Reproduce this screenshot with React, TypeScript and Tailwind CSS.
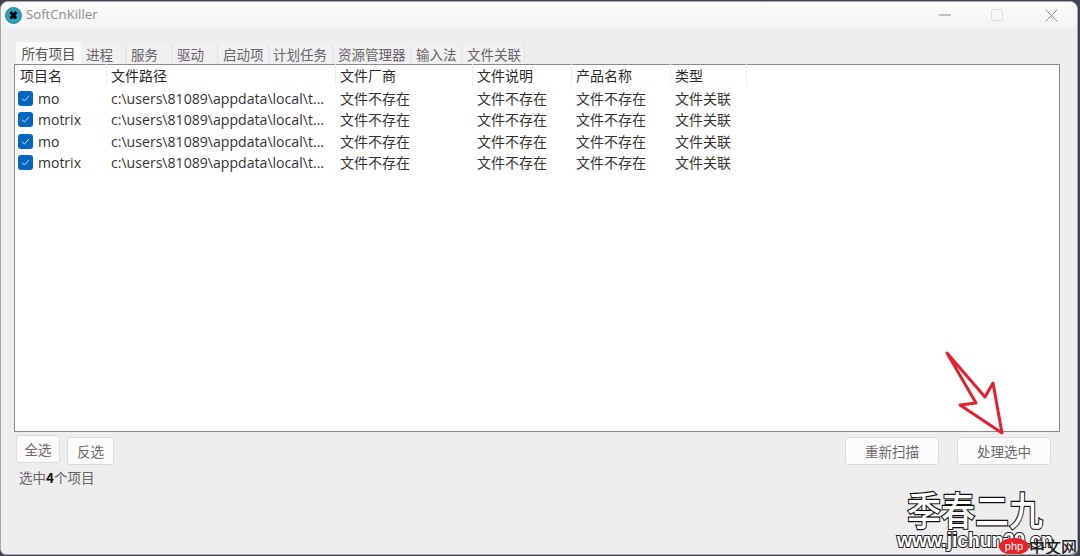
import React from "react";

const tabs: [string, string][] = [
  ["进程", "w-[45px] pl-[5px]"],
  ["服务", "w-[45px] pl-[4px]"],
  ["驱动", "w-[45px] pl-[4px]"],
  ["启动项", "w-[50px] pl-[4px]"],
  ["计划任务", "w-[63px] pl-[3px]"],
  ["资源管理器", "w-[77px] pl-[4px]"],
  ["输入法", "w-[50px] pl-[4px]"],
  ["文件关联", "w-[62px] pl-[4px]"],
];

const cols = ["w-[92px] pl-[5px]", "w-[229px] pl-[4px]", "w-[137px] pl-[4px]", "w-[99px] pl-[4px]", "w-[99px] pl-[4px]", "w-[76px] pl-[4px]"];
const heads = ["项目名", "文件路径", "文件厂商", "文件说明", "产品名称", "类型"];
const names = ["mo", "motrix", "mo", "motrix"];

function Check() {
  return (
    <span className="w-[15px] h-[15px] rounded-[3px] bg-[#0067c0] flex items-center justify-center shrink-0">
      <svg width="11" height="11" viewBox="0 0 11 11" fill="none" stroke="#cfe2f5" strokeWidth="1">
        <path d="M2 5.8 L4.4 8 L9 3" />
      </svg>
    </span>
  );
}

const btn = "h-[28px] rounded-[3px] border border-[#dcdcdc] bg-[#fbfbfb] flex items-center justify-center text-[13.5px] text-[#6a6a6a]";

export default function App() {
  return (
    <div className="w-[1080px] h-[556px] bg-[#3d4350] overflow-hidden pt-px pl-0 pr-[2px] pb-px [font-family:'Noto_Sans_CJK_SC','Noto_Sans',sans-serif]">
      <div className="relative w-full h-full rounded-t-[8px] rounded-b-[6px] border border-[#a8a8a8] bg-[#eeeeee] flex flex-col overflow-hidden">
        {/* title bar */}
        <div className="h-[26px] shrink-0 bg-gradient-to-b from-[#fbfbfb] to-[#f3f3f3] flex items-center pl-[4px] pr-[19px]">
          <svg width="17" height="17" viewBox="0 0 17 17" className="shrink-0">
            <circle cx="8.5" cy="8.5" r="8" fill="#27a3bf" />
            <circle cx="8.5" cy="8.5" r="8" fill="none" stroke="#0f6f88" strokeWidth="0.8" />
            <path d="M5.5 5 L11 11.5 M11.5 5 L5.5 11.5" stroke="#000" strokeWidth="3" />
          </svg>
          <span className="ml-[4px] text-[13.2px] text-[#8d8d8d] [font-family:'Open_Sans',sans-serif]">SoftCnKiller</span>
          <div className="ml-auto flex items-center text-[#b0b0b0]">
            <span className="w-[12px] h-[1.5px] bg-[#c0c0c0]" />
            <span className="ml-[40px] w-[12px] h-[12px] rounded-[2px] border border-[#dedede]" />
            <svg className="ml-[42px]" width="13" height="13" viewBox="0 0 13 13" stroke="#8e8e8e" strokeWidth="1">
              <path d="M0.5 0.5 L12.5 12.5 M12.5 0.5 L0.5 12.5" />
            </svg>
          </div>
        </div>

        {/* tabs */}
        <div className="mt-[15px] ml-[15px] h-[21px] flex items-end text-[13.5px] text-[#666666] relative z-10">
          <div className="w-[65px] h-[22px] -mb-px bg-[#fafafa] flex items-center justify-center text-[#555555] -translate-y-px">所有项目</div>
          {tabs.map(([t, w]) => (
            <div key={t} className={`${w} h-[20px] mr-px bg-[#f0f0f0] border-r border-[#e4e4e4] flex items-center whitespace-nowrap`}>
              {t}
            </div>
          ))}
        </div>

        {/* table */}
        <div className="ml-[13px] w-[1046px] h-[368px] border border-[#8a8a8a] bg-white flex flex-col text-[14px] text-[#2a2a2a] leading-[21px]">
          <div className="flex h-[22px] -mt-px">
            {heads.map((h, i) => (
              <div key={h} className={`${cols[i]} h-[22px] border-r border-[#eeeeee] whitespace-nowrap flex items-center`}>
                {h}
              </div>
            ))}
          </div>
          <div className="flex flex-col mt-[1.6px]">
            {names.map((n, i) => (
              <div key={i} className="flex h-[21.4px] items-center text-[#333333]">
                <div className={`${cols[0]} !pl-[3px] flex items-center gap-[5px]`}>
                  <Check />
                  <span className="[font-family:'Open_Sans',sans-serif] text-[14px]">{n}</span>
                </div>
                <div className={`${cols[1]} [font-family:'Open_Sans',sans-serif] text-[14.1px] whitespace-nowrap`}>
                  {"c:\\users\\81089\\appdata\\local\\t..."}
                </div>
                <div className={cols[2]}>文件不存在</div>
                <div className={cols[3]}>文件不存在</div>
                <div className={cols[4]}>文件不存在</div>
                <div className={cols[5]}>文件关联</div>
              </div>
            ))}
          </div>
        </div>

        {/* bottom controls */}
        <div className="mx-[15px] mt-[3px] flex items-start">
          <div className={`${btn} w-[44px]`}>全选</div>
          <div className={`${btn} w-[47px] ml-[7px] mt-[2px]`}>反选</div>
          <div className={`${btn} w-[94px] ml-auto mt-[2px]`}>重新扫描</div>
          <div className={`${btn} w-[94px] ml-[18px] mr-[11px] mt-[2px]`}>处理选中</div>
        </div>
        <div className="ml-[18px] mt-[2px] text-[13.5px] text-[#666666] leading-[20px]">
          选中<span className="font-bold text-[#111111]">4</span>个项目
        </div>

        {/* red arrow annotation */}
        <svg className="absolute left-[-1px] top-[-2px] pointer-events-none" width="1080" height="556" fill="none">
          <path d="M947 353 L985 397 L993 383 L1002 433 L960 405 L976 403 Z" stroke="#e6212d" strokeWidth="3" strokeLinejoin="round" />
        </svg>

        {/* watermark */}
        <div className="absolute left-[906px] top-[482px] text-[34px] leading-[44px] font-medium text-white whitespace-nowrap scale-y-115 origin-top [-webkit-text-stroke:2px_#111] [paint-order:stroke_fill]">
          季春二九
        </div>
        <div className="absolute left-[896px] top-[527px] text-[19.3px] leading-[24px] font-bold text-white whitespace-nowrap [font-family:'Liberation_Sans',sans-serif] [-webkit-text-stroke:2px_#222] [paint-order:stroke_fill]">
          www.jichun29.cn
        </div>
        <div className="absolute left-[998px] top-[535px] flex items-center">
          <div className="w-[30px] h-[17px] rounded-[50%] bg-[#e8232a] text-white text-[11px] leading-[16px] text-center [font-family:'Liberation_Sans',sans-serif]">php</div>
          <span className="text-[16px] leading-[18px] font-medium text-[#222222] whitespace-nowrap">中文网</span>
        </div>
      </div>
    </div>
  );
}
